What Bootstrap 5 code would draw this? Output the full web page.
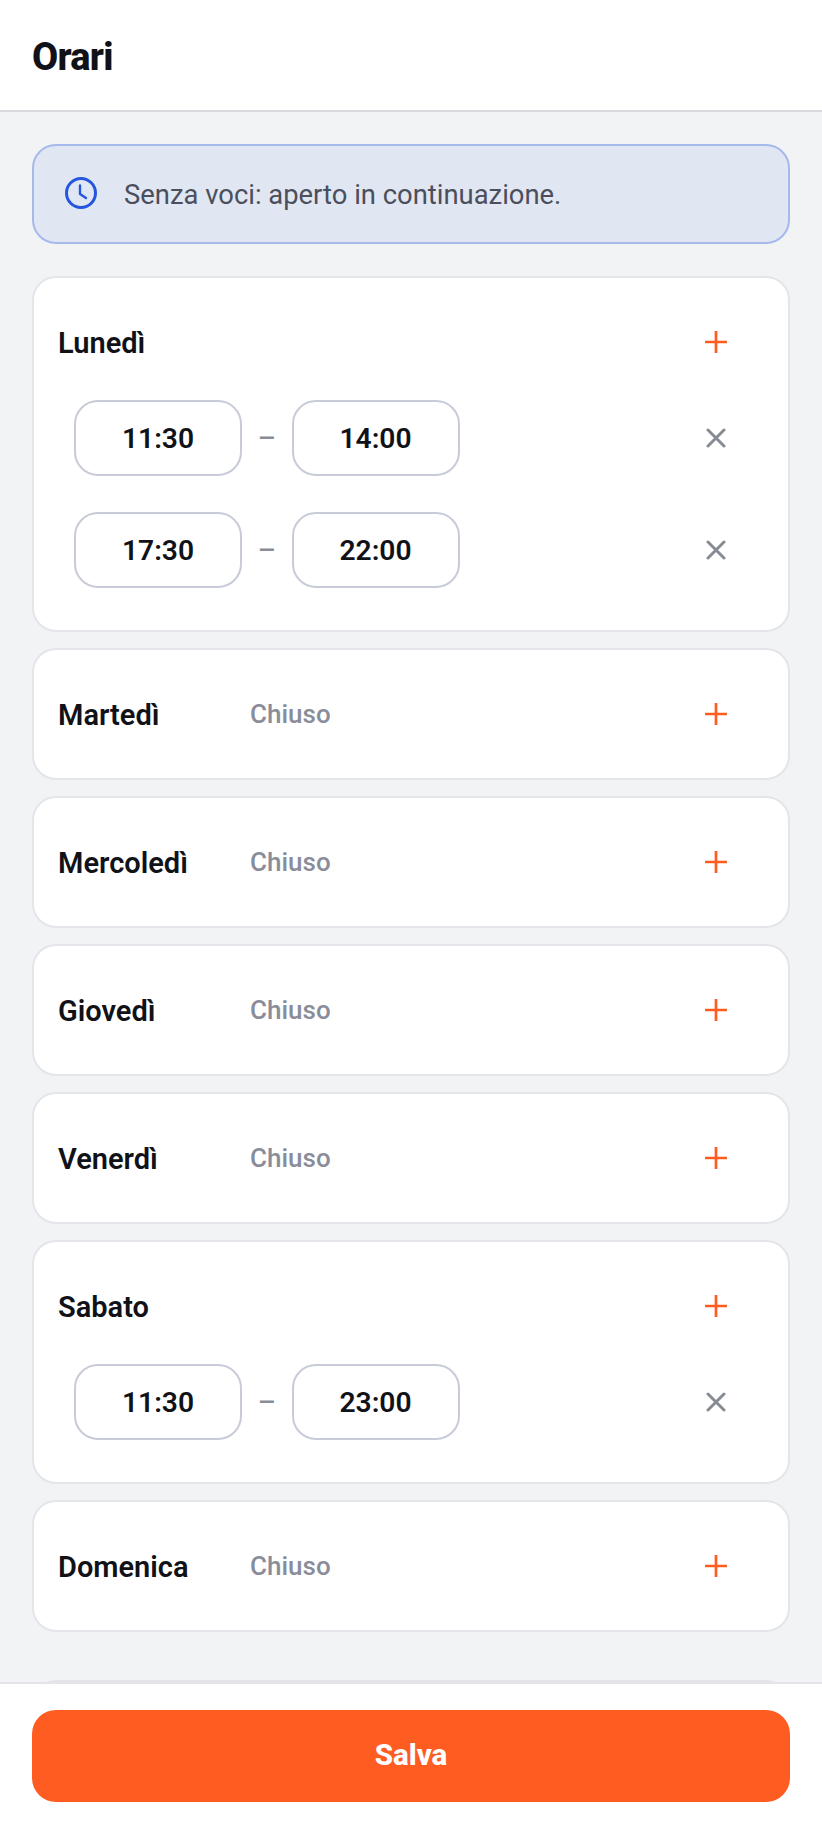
<!DOCTYPE html>
<html lang="it">
  <head>
    <meta charset="UTF-8" />
    <meta name="viewport" content="width=device-width, initial-scale=1.0" />
    <title>Orari</title>
    <link
      rel="stylesheet"
      href="https://cdn.jsdelivr.net/npm/bootstrap@5.3.2/dist/css/bootstrap.min.css"
    />
    <style>
      body {
        font-family: Roboto, "Liberation Sans", sans-serif;
        background: #f2f3f5;
        color: #101218;
      }
      .top-bar {
        height: 112px;
        padding: 6px 32px 0;
        background: #fff;
        border-bottom: 2px solid #d9dade;
      }
      .top-bar h1 {
        font-size: 38px;
        font-weight: 800;
        letter-spacing: -0.76px;
        margin: 0;
      }
      .hours-main {
        padding: 32px 32px 0;
        min-height: 0;
      }
      .info-box {
        height: 100px;
        padding: 0 31px;
        gap: 27px;
        margin-bottom: 32px;
        background: #e1e6f3;
        border: 2px solid #a6b9ec;
        border-radius: 24px;
        font-size: 27.4px;
        color: #4b4f5c;
      }
      .info-box svg {
        margin-top: -2px;
      }
      .info-box span {
        padding-top: 3px;
      }
      .day-box {
        padding: 24px;
        margin-bottom: 16px;
        background: #fff;
        border: 2px solid #e4e5ea;
        border-radius: 24px;
      }
      .day-box.peek {
        margin-top: 48px;
        height: 132px;
      }
      .day-head {
        height: 80px;
      }
      .day-name {
        width: 192px;
        padding-top: 3px;
        font-size: 29px;
        font-weight: 600;
      }
      .day-closed {
        font-size: 26px;
        font-weight: 500;
        color: #898d99;
      }
      .slot-row {
        height: 112px;
        padding: 18px 0 18px 16px;
      }
      .time-box {
        width: 168px;
        height: 76px;
        padding-top: 2px;
        background: #fff;
        border: 2px solid #c8ccd8;
        border-radius: 24px;
        font-size: 28.2px;
        font-weight: 600;
      }
      .time-sep {
        width: 49.5px;
        padding-top: 2px;
        text-align: center;
        font-size: 28px;
        font-weight: 500;
        color: #898d99;
      }
      .icon-btn {
        width: 48px;
        height: 48px;
        margin-right: 24px;
        background: none;
        border: 0;
      }
      .save-bar {
        height: 146px;
        padding: 26px 32px 0;
        background: #fff;
        border-top: 2px solid #e4e5ea;
      }
      .save-btn {
        height: 92px;
        padding-bottom: 8px;
        background: #ff5c21;
        border: 0;
        border-radius: 24px;
        font-size: 29.5px;
        font-weight: 800;
      }
      .save-btn:hover {
        background: #ff5c21;
        color: #fff;
      }
    </style>
  </head>
  <body class="d-flex flex-column vh-100 overflow-hidden">
    <header class="top-bar d-flex align-items-center flex-shrink-0">
      <h1>Orari</h1>
    </header>

    <main class="hours-main flex-grow-1 overflow-hidden">
      <div class="info-box d-flex align-items-center">
        <svg width="32" height="32" viewBox="0 0 32 32" fill="none" stroke="#2456e0" stroke-width="3" stroke-linecap="round" stroke-linejoin="round">
          <circle cx="16" cy="16" r="14.5" />
          <path d="M15 8.5V17l6 4" stroke-width="2.4" />
        </svg>
        <span>Senza voci: aperto in continuazione.</span>
      </div>
      <div id="days"></div>
      <div class="day-box peek"></div>
    </main>

    <footer class="save-bar flex-shrink-0">
      <button class="btn save-btn text-white w-100">Salva</button>
    </footer>

    <script>
      const days = [
        { name: "Lunedì", slots: [["11:30", "14:00"], ["17:30", "22:00"]] },
        { name: "Martedì", slots: [] },
        { name: "Mercoledì", slots: [] },
        { name: "Giovedì", slots: [] },
        { name: "Venerdì", slots: [] },
        { name: "Sabato", slots: [["11:30", "23:00"]] },
        { name: "Domenica", slots: [] },
      ];

      const plusIcon = `<svg width="22" height="22" viewBox="0 0 22 22" fill="none" stroke="#ff5c21" stroke-width="2.7"><path d="M11 0v22M0 11h22" /></svg>`;
      const crossIcon = `<svg width="20" height="20" viewBox="0 0 20 20" fill="none" stroke="#868b94" stroke-width="3" stroke-linecap="round"><path d="M2 2l16 16M18 2L2 18" /></svg>`;

      const box = document.getElementById("days");
      days.forEach((day) => {
        let html = `<div class="day-box">
          <div class="day-head d-flex align-items-center">
            <div class="day-name">${day.name}</div>
            <div class="day-closed flex-grow-1">${day.slots.length ? "" : "Chiuso"}</div>
            <button class="icon-btn d-flex align-items-center justify-content-center p-0">${plusIcon}</button>
          </div>`;
        day.slots.forEach((slot) => {
          html += `<div class="slot-row d-flex align-items-center">
            <div class="time-box d-flex align-items-center justify-content-center">${slot[0]}</div>
            <div class="time-sep">–</div>
            <div class="time-box d-flex align-items-center justify-content-center">${slot[1]}</div>
            <button class="icon-btn d-flex align-items-center justify-content-center p-0 ms-auto">${crossIcon}</button>
          </div>`;
        });
        html += `</div>`;
        box.insertAdjacentHTML("beforeend", html);
      });
    </script>
    <script src="https://cdn.jsdelivr.net/npm/bootstrap@5.3.2/dist/js/bootstrap.bundle.min.js"></script>
  </body>
</html>
